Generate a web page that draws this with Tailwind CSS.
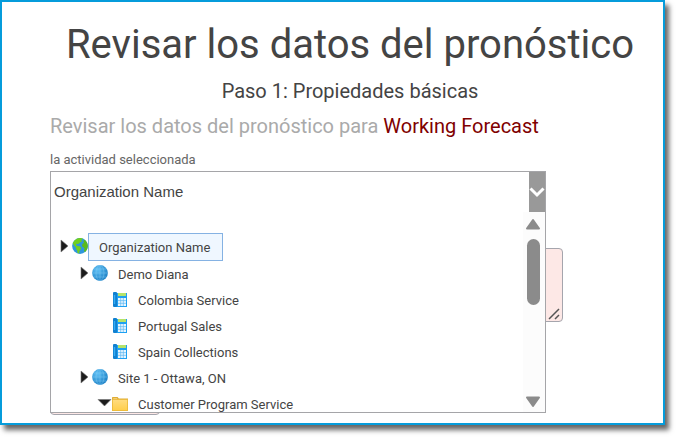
<!DOCTYPE html>
<html lang="es">
<head>
    <meta charset="UTF-8">
    <meta name="viewport" content="width=device-width, initial-scale=1.0">
    <title>Revisar los datos del pronóstico</title>
    <script src="https://cdn.jsdelivr.net/npm/@tailwindcss/browser@4"></script>
</head>
<body class="bg-white pr-3.5 pb-3.5 font-['Roboto',sans-serif] text-[#444]">

    <!-- Shared icons -->
    <svg class="absolute h-0 w-0">
        <defs>
            <radialGradient id="ocean" cx="35%" cy="30%" r="75%">
                <stop offset="0" stop-color="#5fc0f5"/>
                <stop offset="1" stop-color="#1c7fc4"/>
            </radialGradient>
            <linearGradient id="manila" x1="0" y1="0" x2="0" y2="1">
                <stop offset="0" stop-color="#ffdc80"/>
                <stop offset="1" stop-color="#ffce4a"/>
            </linearGradient>
        </defs>
        <symbol id="arrow-right" viewBox="0 0 16 16"><path d="M5 2 L12 8 L5 14 Z" fill="#1c1c1c" stroke="#777" stroke-width=".6"/></symbol>
        <symbol id="arrow-down" viewBox="0 0 16 16"><path d="M2 4.5 H15 L8.5 11 Z" fill="#1c1c1c" stroke="#777" stroke-width=".6"/></symbol>
        <symbol id="earth" viewBox="0 0 16 16">
            <circle cx="8" cy="8" r="7.9" fill="#2f97dc"/>
            <path d="M.8 5 C2.4 1.6 5.4 .1 8 .1 C9.4 .2 10.4 .5 11 .8 L9.4 2 L10 3.4 L8.2 4.2 L7 5.6 L5.8 6 L4.4 5.8 L4 7 L5.4 8 L7.6 8.2 L9.4 9.8 L8.4 11.8 L7.4 13.2 L7.2 15.6 L5.6 15 L5.2 12.6 L4 10.8 L3.6 9 L2 7.4 Z" fill="#71cf1f"/>
            <path d="M12.2 1.4 C14.6 3 15.8 5.4 15.9 8 C15.8 10.6 14.6 12.8 12.8 14.2 L12 12.4 L12.6 10.6 L11.4 9.2 L10 8.2 L10.4 5.8 L12 5 L11.4 3.2 Z" fill="#5cbb1c"/>
        </symbol>
        <symbol id="globe" viewBox="0 0 16 16">
            <circle cx="8" cy="8" r="7.9" fill="url(#ocean)"/>
            <g fill="none" stroke="#8cd2f7" stroke-width=".6" opacity=".7">
                <path d="M8 .3 V15.7 M.3 8 H15.7 M1.6 4 H14.4 M1.6 12 H14.4"/>
                <ellipse cx="8" cy="8" rx="4" ry="7.7"/>
            </g>
        </symbol>
        <symbol id="phone" viewBox="0 0 16 16">
            <rect x="4" y="1" width="11" height="14" fill="#1ea0f2"/>
            <rect x="1" y="0" width="4" height="15" rx="1" fill="#1180d0"/>
            <path d="M2.5 3 V12" stroke="#35acf5" stroke-width="1.4"/>
            <rect x="6" y="1" width="8" height="3" fill="#b5e36b"/>
            <rect x="6" y="6" width="8" height="8" fill="#e9f6ff"/>
            <path d="M8.7 6 V14 M11.3 6 V14 M6 8.6 H14 M6 11.3 H14" stroke="#5bb8f2" stroke-width=".7"/>
        </symbol>
        <symbol id="folder" viewBox="0 0 16 16">
            <path d="M0 15 V1.6 Q0 1 .8 1 H5.6 L6.8 2.6 H16 V15 Z" fill="#e0ad35"/>
            <rect x=".4" y="3.6" width="15.2" height="11" fill="url(#manila)" stroke="#ecb836" stroke-width=".6"/>
            <path d="M1.2 2.6 H5.2" stroke="#f7d98e" stroke-width=".8"/>
        </symbol>
    </svg>

    <main class="border-2 border-[#059cdb] pt-[19px] pr-[13px] pb-2 pl-12 shadow-[4px_5px_5px_rgba(0,0,0,0.6)]">
        <h1 class="text-center text-[40px] leading-12 whitespace-nowrap">Revisar los datos del pronóstico</h1>
        <h2 class="mt-2 text-center text-xl leading-7">Paso 1: Propiedades básicas</h2>
        <p class="mt-[7px] text-xl leading-7 text-[#aaa]">Revisar los datos del pronóstico para <span class="text-[#800000]">Working Forecast</span></p>

        <form>
            <label for="activity" class="mt-2.5 block text-[13px] leading-5 text-[#666]">la actividad seleccionada</label>

            <!-- Activity picker -->
            <div class="relative z-10 mt-px w-full max-w-[496px]">
                <div class="flex h-[41px] border border-b-0 border-[#a5a5a8] bg-white">
                    <input id="activity" type="text" value="Organization Name" class="min-w-0 flex-1 px-[3px] font-['Liberation_Sans',sans-serif] text-[15px] outline-none">
                    <button type="button" aria-label="Abrir lista" class="flex w-4 items-center justify-center bg-[#999]">
                        <svg class="h-4 w-4" viewBox="0 0 16 16" fill="none" stroke="#fff" stroke-width="3"><path d="M1.5 4.5 L8 11 L14.5 4.5"/></svg>
                    </button>
                </div>

                <div class="absolute top-full left-0 flex h-[201px] w-full overflow-hidden border border-t-0 border-[#a5a5a8] bg-white">
                    <ul role="tree" class="flex-1 overflow-hidden pt-[21px] text-[13px]">
                        <li role="treeitem" class="flex h-7 items-center pl-[5px]">
                            <button type="button" aria-label="Contraer"><svg class="mb-0.5 block h-4 w-4"><use href="#arrow-right"/></svg></button>
                            <svg class="mb-0.5 h-4 w-4"><use href="#earth"/></svg>
                            <span class="flex h-7 items-center border border-[#85b2e3] bg-[#eff7ff] pt-0.5 pr-3 pl-2.5">Organization Name</span>
                        </li>
                        <li role="treeitem" class="flex h-[26px] items-center pl-[25px]">
                            <button type="button" aria-label="Expandir"><svg class="mb-0.5 block h-4 w-4"><use href="#arrow-right"/></svg></button>
                            <svg class="mb-0.5 h-4 w-4"><use href="#globe"/></svg>
                            <span class="pt-0.5 pl-2.5">Demo Diana</span>
                        </li>
                        <li role="treeitem" class="flex h-[26px] items-center pl-[61px]">
                            <svg class="h-4 w-4"><use href="#phone"/></svg>
                            <span class="pt-0.5 pl-2.5">Colombia Service</span>
                        </li>
                        <li role="treeitem" class="flex h-[26px] items-center pl-[61px]">
                            <svg class="h-4 w-4"><use href="#phone"/></svg>
                            <span class="pt-0.5 pl-2.5">Portugal Sales</span>
                        </li>
                        <li role="treeitem" class="flex h-[26px] items-center pl-[61px]">
                            <svg class="h-4 w-4"><use href="#phone"/></svg>
                            <span class="pt-0.5 pl-2.5">Spain Collections</span>
                        </li>
                        <li role="treeitem" class="flex h-[26px] items-center pl-[25px]">
                            <button type="button" aria-label="Expandir"><svg class="mb-0.5 block h-4 w-4"><use href="#arrow-right"/></svg></button>
                            <svg class="mb-0.5 h-4 w-4"><use href="#globe"/></svg>
                            <span class="pt-0.5 pl-2.5">Site 1 - Ottawa, ON</span>
                        </li>
                        <li role="treeitem" class="flex h-[26px] items-center pl-[45px]">
                            <button type="button" aria-label="Contraer"><svg class="mb-0.5 block h-4 w-4"><use href="#arrow-down"/></svg></button>
                            <svg class="h-4 w-4"><use href="#folder"/></svg>
                            <span class="pt-0.5 pl-2.5">Customer Program Service</span>
                        </li>
                    </ul>

                    <!-- Scrollbar -->
                    <div class="flex w-[22px] flex-col items-center bg-[#fcfcfc] pt-1.5 pr-0.5 pb-1">
                        <svg class="h-3 w-4 shrink-0" viewBox="0 0 16 12" fill="#8b8b8b" stroke="#8b8b8b" stroke-width="2" stroke-linejoin="round"><path d="M8 2 L14 10.5 H2 Z"/></svg>
                        <div class="mt-[9px] h-[66px] w-[13px] rounded-full bg-[#8b8b8b]"></div>
                        <svg class="mt-auto h-3 w-4 shrink-0" viewBox="0 0 16 12" fill="#8b8b8b" stroke="#8b8b8b" stroke-width="2" stroke-linejoin="round"><path d="M8 10 L14 1.5 H2 Z"/></svg>
                    </div>
                </div>
            </div>

            <!-- Fields below the open list -->
            <div class="relative mt-9 h-[74px] max-w-[513px]">
                <textarea aria-label="Descripción" class="block h-full w-full resize-none rounded border border-[#a5a5ad] bg-[#fde8e6]"></textarea>
                <svg class="absolute right-[3px] bottom-0.5 h-3 w-3" viewBox="0 0 12 12" stroke="#555" stroke-width="1.5"><path d="M1 11 L11 1 M7 11 L11 7"/></svg>
            </div>
            <input type="text" aria-label="Fecha" class="mt-[59px] block h-[34px] w-[110px] rounded border border-[#a5a5ad] bg-[#fde8e6]">
        </form>
    </main>

</body>
</html>
